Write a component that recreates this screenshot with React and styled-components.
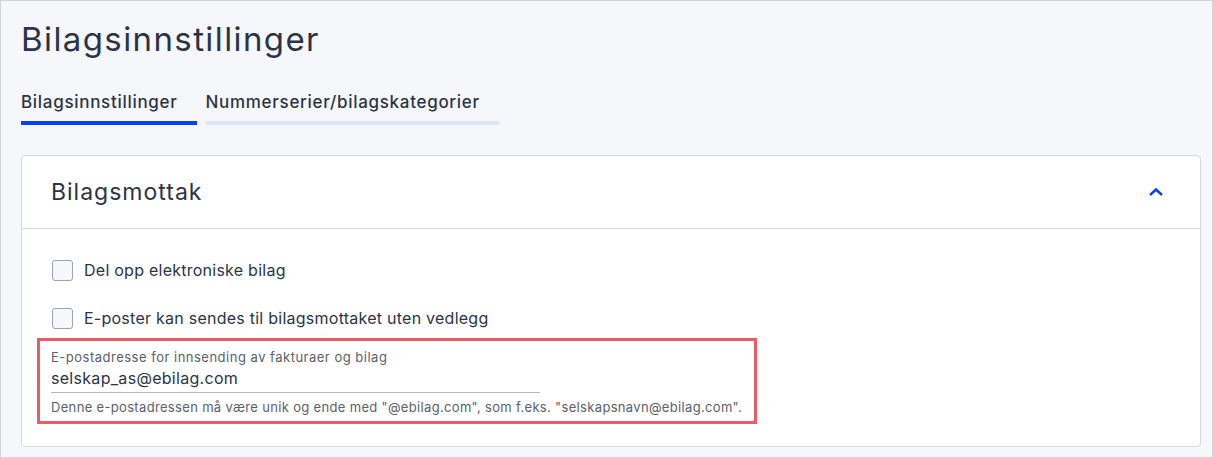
import styled, { createGlobalStyle } from 'styled-components';

const Global = createGlobalStyle`
  html, body { margin: 0; padding: 0; }
  body {
    background: #f6f7fb;
    font-family: 'Inter', 'Noto Sans', sans-serif;
    color: #2b3447;
  }
`

const Page = styled.div`
  box-sizing: border-box;
  width: 1213px;
  height: 458px;
  border: 1px solid #d3d4d8;
  background: #f6f7fb;
  padding: 18px 11px 0 20px;
`

const Title = styled.h1`
  margin: 0;
  font-size: 33px;
  font-weight: 400;
  line-height: 40px;
  color: #2b3447;
  letter-spacing: 1.4px;
`

const Tabs = styled.div`
  display: flex;
  gap: 9px;
  margin-top: 33px;
`

const Tab = styled.div`
  font-size: 17px;
  font-weight: 500;
  color: #2b3447;
  letter-spacing: 0.7px;
  padding-bottom: 9px;
  padding-right: 19px;
  border-bottom: ${p => (p.$active ? '4px solid #0a3ff5' : '4px solid #dfe5f7')};
  line-height: 20px;
`

const Card = styled.section`
  margin-top: 30px;
  background: #fff;
  border: 1px solid #d6d8dc;
  border-radius: 4px;
  width: 1180px;
  box-sizing: border-box;
`

const CardHeader = styled.div`
  display: flex;
  align-items: center;
  justify-content: space-between;
  height: 72px;
  padding: 0 36px 0 29px;
  border-bottom: 1px solid #d6d8dc;
`

const CardTitle = styled.h2`
  margin: 0;
  font-size: 23px;
  font-weight: 400;
  letter-spacing: 1px;
  color: #2b3447;
`

const CardBody = styled.div`
  padding: 30px 16px 22px 15px;
  display: flex;
  flex-direction: column;
`

const CheckRow = styled.label`
  display: flex;
  align-items: center;
  gap: 11px;
  padding-left: 15px;
  font-size: 16px;
  letter-spacing: 0.25px;
  color: #2b3447;
  height: 22px;
  margin-bottom: 26px;
`

const Box = styled.span`
  width: 19px;
  height: 19px;
  border: 1px solid #9fa3ad;
  border-radius: 3px;
  background: #f6f7fb;
  flex-shrink: 0;
`

const Highlight = styled.div`
  margin-top: -17px;
  width: 720px;
  box-sizing: border-box;
  border: 3px solid #e55d68;
  padding: 8px 11px 6px 11px;
`

const FieldLabel = styled.div`
  font-size: 13px;
  color: #5b606b;
  letter-spacing: 0.5px;
  line-height: 16px;
`

const FieldValue = styled.div`
  width: 489px;
  font-size: 16px;
  color: #2b3447;
  letter-spacing: 0.3px;
  line-height: 20px;
  padding: 3px 0 4px;
  border-bottom: 1px solid #b5b8be;
`

const Helper = styled.div`
  font-size: 13px;
  color: #5b606b;
  letter-spacing: 0.33px;
  line-height: 16px;
  white-space: nowrap;
  margin-top: 6px;
`

export default function App() {
  return (
    <>
      <Global />
      <Page>
        <Title>Bilagsinnstillinger</Title>
        <Tabs>
          <Tab $active>Bilagsinnstillinger</Tab>
          <Tab>Nummerserier/bilagskategorier</Tab>
        </Tabs>
        <Card>
          <CardHeader>
            <CardTitle>Bilagsmottak</CardTitle>
            <svg width="16" height="10" viewBox="0 0 16 10">
              <path d="M2 8 L8 2.5 L14 8" fill="none" stroke="#0a3ff5" strokeWidth="2.4" />
            </svg>
          </CardHeader>
          <CardBody>
            <CheckRow><Box />Del opp elektroniske bilag</CheckRow>
            <CheckRow><Box />E-poster kan sendes til bilagsmottaket uten vedlegg</CheckRow>
            <Highlight>
              <FieldLabel>E-postadresse for innsending av fakturaer og bilag</FieldLabel>
              <FieldValue>selskap_as@ebilag.com</FieldValue>
              <Helper>Denne e-postadressen må være unik og ende med "@ebilag.com", som f.eks. "selskapsnavn@ebilag.com".</Helper>
            </Highlight>
          </CardBody>
        </Card>
      </Page>
    </>
  )
}
